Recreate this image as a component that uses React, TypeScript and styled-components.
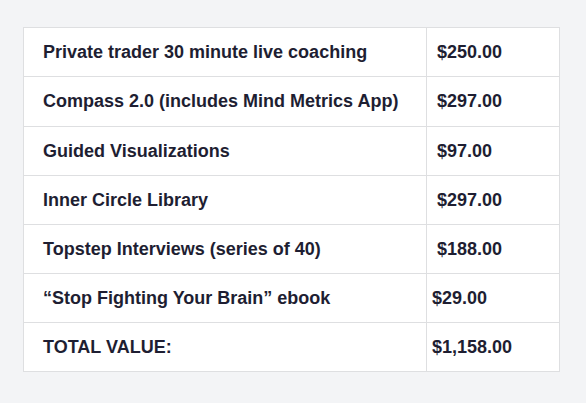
import React from 'react';
import styled, { createGlobalStyle } from 'styled-components';

const GlobalStyle = createGlobalStyle`
  html, body {
    margin: 0;
    padding: 0;
    background: #f3f4f6;
  }
  body {
    font-family: "Liberation Sans", Arial, sans-serif;
  }
`;

const Page = styled.div`
  width: 586px;
  height: 403px;
  padding: 27px 0 0 23px;
  box-sizing: border-box;
`;

const Table = styled.table`
  border-collapse: collapse;
  background: #ffffff;
  width: 537px;
  border: 1px solid #dedfe1;
`;

const Row = styled.tr<{ $tall?: boolean }>`
  height: ${(p) => (p.$tall ? 50 : 49)}px;
`;

const NameCell = styled.td`
  width: 403px;
  box-sizing: border-box;
  padding: 0 0 0 19px;
  border: 1px solid #dedfe1;
  font-size: 18px;
  font-weight: 700;
  color: #1e1e32;
  vertical-align: middle;
`;

const PriceCell = styled.td<{ $tight?: boolean }>`
  padding: 0 0 0 ${(p) => (p.$tight ? 5 : 10)}px;
  border: 1px solid #dedfe1;
  font-size: 18px;
  font-weight: 700;
  color: #1e1e32;
  vertical-align: middle;
`;

const items = [
  { name: 'Private trader 30 minute live coaching', price: '$250.00' },
  { name: 'Compass 2.0 (includes Mind Metrics App)', price: '$297.00', tall: true },
  { name: 'Guided Visualizations', price: '$97.00' },
  { name: 'Inner Circle Library', price: '$297.00' },
  { name: 'Topstep Interviews (series of 40)', price: '$188.00' },
  { name: '\u201CStop Fighting Your Brain\u201D ebook', price: '$29.00', tight: true },
  { name: 'TOTAL VALUE:', price: '$1,158.00', tight: true },
];

const App = () => {
  return (
    <>
      <GlobalStyle />
      <Page>
        <Table>
          <tbody>
            {items.map((item) => (
              <Row key={item.name} $tall={item.tall}>
                <NameCell>{item.name}</NameCell>
                <PriceCell $tight={item.tight}>{item.price}</PriceCell>
              </Row>
            ))}
          </tbody>
        </Table>
      </Page>
    </>
  );
};

export default App;
